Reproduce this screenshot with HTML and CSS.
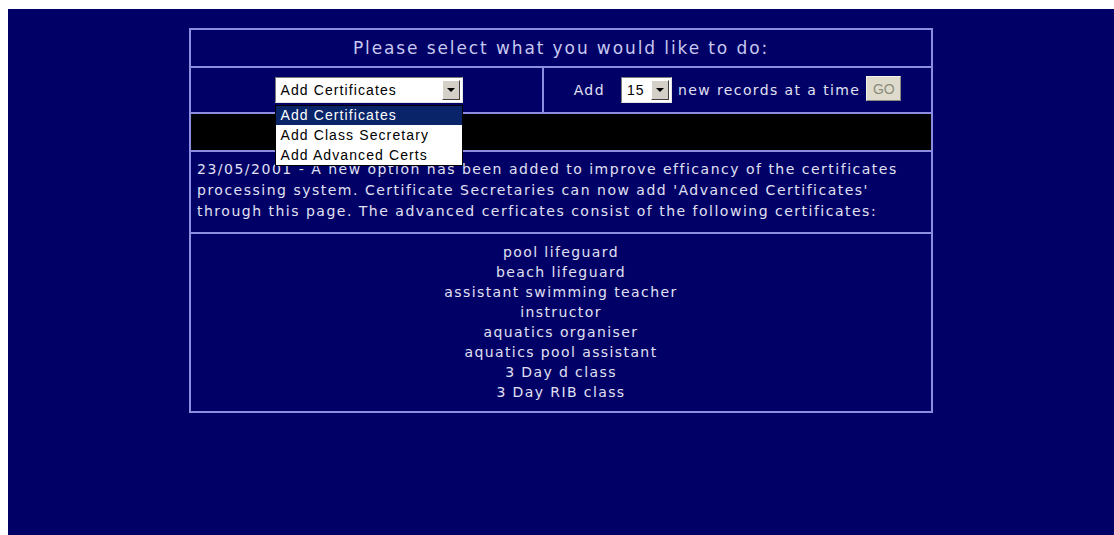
FILE: index.html
```html
<!DOCTYPE html>
<html lang="en">
<head>
<meta charset="utf-8">
<title>Certificates</title>
<link rel="stylesheet" href="styles.css">
</head>
<body>
<div class="page">
  <div class="panel">
    <div class="title">Please select what you would like to do:</div>

    <div class="controls">
      <div class="cell">
        <div class="select wide">
          <span class="value">Add Certificates</span>
          <span class="arrow"></span>
          <ul class="options">
            <li class="active">Add Certificates</li>
            <li>Add Class Secretary</li>
            <li>Add Advanced Certs</li>
          </ul>
        </div>
      </div>
      <div class="cell">
        <span class="label">Add</span>
        <div class="select small">
          <span class="value">15</span>
          <span class="arrow"></span>
        </div>
        <span class="label">new records at a time</span>
        <button class="go" type="button">GO</button>
      </div>
    </div>

    <div class="blackbar"></div>

    <div class="notice">
      23/05/2001 - A new option has been added to improve efficancy of the certificates processing system. Certificate Secretaries can now add 'Advanced Certificates' through this page. The advanced cerficates consist of the following certificates:
    </div>

    <ul class="certs">
      <li>pool lifeguard</li>
      <li>beach lifeguard</li>
      <li>assistant swimming teacher</li>
      <li>instructor</li>
      <li>aquatics organiser</li>
      <li>aquatics pool assistant</li>
      <li>3 Day d class</li>
      <li>3 Day RIB class</li>
    </ul>
  </div>
</div>
</body>
</html>
```

FILE: styles.css
```css
html, body {
  background: #ffffff;
}

body {
  margin: 9px 0 0 8px;
  font-family: "DejaVu Sans", Verdana, sans-serif;
  overflow: hidden;
}

.page {
  background: #000066;
  min-height: 526px;
  padding-top: 19px;
  box-sizing: border-box;
}

.panel {
  width: 744px;
  margin: 0 auto;
  border: 2px solid #8c8ce0;
  box-sizing: border-box;
  color: #e0e0f4;
}

.title {
  height: 36px;
  display: flex;
  align-items: center;
  justify-content: center;
  border-bottom: 2px solid #8c8ce0;
  font-size: 17px;
  letter-spacing: 1.9px;
  color: #c8c8f0;
}

.controls {
  display: grid;
  grid-template-columns: 353px 1fr;
  height: 44px;
  border-bottom: 2px solid #8c8ce0;
}

.cell {
  display: flex;
  align-items: center;
  justify-content: center;
  gap: 6px;
}

.cell:first-child {
  border-right: 2px solid #8c8ce0;
}

.label {
  font-size: 14px;
  letter-spacing: 1.4px;
}

.label:first-child {
  margin-right: 10px;
}

/* drop-down field */
.select {
  position: relative;
  height: 26px;
  background: #ffffff;
  border: 1px solid #7a7a7a;
  border-right-color: #e4e4e4;
  border-bottom-color: #e4e4e4;
  box-sizing: border-box;
  display: flex;
  align-items: center;
  font-family: "Liberation Sans", Arial, sans-serif;
  font-size: 14px;
  letter-spacing: 1.1px;
  color: #000000;
}

.select.wide {
  width: 188px;
  margin-left: 4px;
}

.select.small {
  width: 51px;
}

.select .value {
  flex: 1;
  padding-left: 5px;
  white-space: nowrap;
}

.select .arrow {
  width: 18px;
  height: 20px;
  margin-right: 2px;
  background: #d4d0c8;
  border: 1px solid #ffffff;
  border-right-color: #404040;
  border-bottom-color: #404040;
  box-sizing: border-box;
  display: flex;
  align-items: center;
  justify-content: center;
}

.select .arrow::after {
  content: "";
  border-left: 4px solid transparent;
  border-right: 4px solid transparent;
  border-top: 4px solid #000000;
}

/* open option list */
.options {
  position: absolute;
  left: -1px;
  top: calc(100% + 3px);
  width: 188px;
  margin: 0;
  padding: 0;
  list-style: none;
  background: #ffffff;
  border: 1px solid #000000;
  box-sizing: border-box;
  z-index: 2;
}

.options li {
  height: 19px;
  line-height: 19px;
  padding-left: 5px;
  white-space: nowrap;
}

.options li + li {
  height: 20px;
  line-height: 20px;
}

.options li.active {
  background: #0a246a;
  color: #ffffff;
}

.go {
  width: 35px;
  height: 25px;
  padding: 0;
  background: #dedbcc;
  border: 1px solid #f4f4ec;
  border-right-color: #8a8a80;
  border-bottom-color: #8a8a80;
  font-family: "Liberation Sans", Arial, sans-serif;
  font-size: 14px;
  color: #8c8c7c;
  margin-bottom: 3px;
}

.blackbar {
  height: 36px;
  background: #000000;
  border-bottom: 2px solid #8c8ce0;
}

.notice {
  padding: 7px 6px 10px;
  font-size: 14px;
  line-height: 21px;
  letter-spacing: 1.5px;
  border-bottom: 2px solid #8c8ce0;
}

.certs {
  margin: 0;
  padding: 8px 0 9px;
  list-style: none;
  text-align: center;
  font-size: 14px;
  line-height: 20px;
  letter-spacing: 1.4px;
}
```
